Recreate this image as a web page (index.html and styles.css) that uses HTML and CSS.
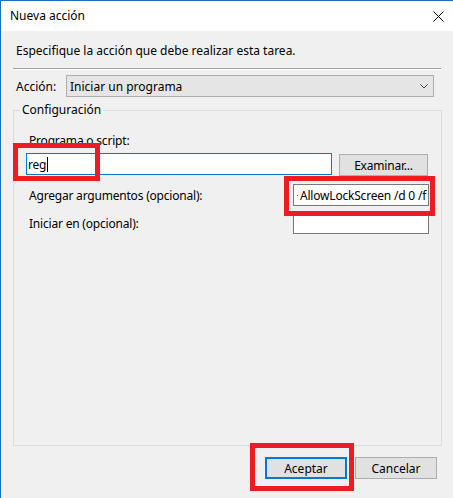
FILE: index.html
```html
<!DOCTYPE html>
<html lang="es">
<head>
    <meta charset="UTF-8">
    <title>Nueva acción</title>
    <link rel="stylesheet" href="styles.css">
</head>
<body>
    <div class="window">
        <div class="titlebar">
            <span class="title">Nueva acción</span>
            <svg class="close" width="11" height="11" viewBox="0 0 11 11">
                <path d="M0.5 0.5 L10.5 10.5 M10.5 0.5 L0.5 10.5" stroke="#000" stroke-width="1" fill="none"/>
            </svg>
        </div>
        <div class="content">
            <p class="intro">Especifique la acción que debe realizar esta tarea.</p>
            <div class="separator"></div>
            <div class="action-row">
                <span class="action-label">Acción:</span>
                <div class="select">
                    <span>Iniciar un programa</span>
                    <svg class="chevron" width="8" height="5" viewBox="0 0 8 5">
                        <polyline points="0.5,0.5 4,4 7.5,0.5" stroke="#444" stroke-width="1" fill="none"/>
                    </svg>
                </div>
            </div>
            <fieldset class="group">
                <legend>Configuración</legend>
                <div class="group-body">
                    <div class="field-label">Programa o script:</div>
                    <div class="program-row">
                        <div class="input focused">reg<span class="caret"></span></div>
                        <div class="btn browse">Examinar...</div>
                    </div>
                    <div class="arg-row first">
                        <span class="arg-label">Agregar argumentos (opcional):</span>
                        <div class="input small"><span class="dot"></span>AllowLockScreen /d 0 /f</div>
                    </div>
                    <div class="arg-row">
                        <span class="arg-label">Iniciar en (opcional):</span>
                        <div class="input small"></div>
                    </div>
                </div>
            </fieldset>
            <div class="buttons">
                <div class="btn default">Aceptar</div>
                <div class="btn">Cancelar</div>
            </div>
        </div>

        <!-- annotation frames drawn over the dialog -->
        <div class="mark mark-program"></div>
        <div class="mark mark-args"></div>
        <div class="mark mark-ok"></div>
    </div>
</body>
</html>
```

FILE: styles.css
```css
body {
    margin: 0;
    font-family: 'Noto Sans', 'Open Sans', Arial, sans-serif;
    font-size: 12px;
    color: #000;
    background: #f0f0f0;
}
.window {
    position: relative;
    width: 453px;
    height: 498px;
    box-sizing: border-box;
    border-top: 1px solid #1b6ec2;
    border-left: 1px solid #1b6ec2;
    display: flex;
    flex-direction: column;
    overflow: hidden;
}
.titlebar {
    height: 30px;
    flex: none;
    background: #fff;
    display: flex;
    align-items: center;
    justify-content: space-between;
    padding: 0 9px 0 9px;
}
.title {
    line-height: 30px;
}
.close {
    display: block;
}
.content {
    flex: 1;
    background: #f0f0f0;
    display: flex;
    flex-direction: column;
}
.intro {
    margin: 12px 0 0 15px;
    line-height: 16px;
}
.separator {
    margin: 9px 0 0 12px;
    width: 428px;
    border-top: 1px solid #a0a0a0;
    border-bottom: 1px solid #fff;
}
.action-row {
    margin-top: 5px;
    padding-left: 15px;
    display: flex;
    align-items: center;
}
.action-label {
    width: 50px;
}
.select {
    width: 368px;
    height: 22px;
    box-sizing: border-box;
    border: 1px solid #adadad;
    background: #e5e5e5;
    display: flex;
    align-items: center;
    justify-content: space-between;
    padding: 0 5px 0 3px;
}
.chevron {
    display: block;
}
.group {
    margin: 5px 0 0 12px;
    width: 429px;
    height: 344px;
    box-sizing: border-box;
    border: 1px solid #dcdcdc;
    padding: 0;
}
.group legend {
    margin-left: 6px;
    padding: 0 2px;
    line-height: 16px;
}
.group-body {
    padding: 0 12px 0 12px;
    letter-spacing: -0.2px;
}
.field-label {
    margin: 15px 0 0 3px;
    line-height: 16px;
}
.program-row {
    margin-top: 4px;
    display: flex;
    align-items: flex-start;
    justify-content: space-between;
}
.input {
    height: 22px;
    box-sizing: border-box;
    border: 1px solid #7a7a7a;
    background: #fff;
    display: flex;
    align-items: center;
    padding-left: 1px;
    white-space: nowrap;
    overflow: hidden;
}
.input.focused {
    width: 306px;
    border-color: #0078d7;
}
.input.small {
    width: 136px;
    padding-left: 3px;
}
.caret {
    width: 1px;
    height: 15px;
    margin-left: 1px;
    background: #000;
}
.dot {
    flex: none;
    width: 1px;
    height: 1px;
    margin: 0 2px 0 0;
    background: #0078d7;
}
.arg-row {
    margin-top: 6px;
    display: flex;
    align-items: center;
    justify-content: space-between;
}
.arg-row.first {
    margin-top: 8px;
}
.arg-label {
    margin-left: 3px;
}
.btn {
    height: 22px;
    box-sizing: border-box;
    border: 1px solid #adadad;
    background: #e1e1e1;
    display: flex;
    align-items: center;
    justify-content: center;
}
.btn.browse {
    width: 89px;
    margin: 1px 1px 0 0;
}
.buttons {
    margin-top: 11px;
    padding-right: 16px;
    display: flex;
    justify-content: flex-end;
    gap: 8px;
}
.buttons .btn {
    width: 82px;
}
.btn.default {
    border: 2px solid #0078d7;
}
.mark {
    position: absolute;
    border: 5px solid #ed1c24;
    box-sizing: border-box;
}
.mark-program {
    left: 12px;
    top: 142px;
    width: 87px;
    height: 38px;
}
.mark-args {
    left: 283px;
    top: 175px;
    width: 151px;
    height: 40px;
}
.mark-ok {
    left: 249px;
    top: 442px;
    width: 104px;
    height: 48px;
}
```
